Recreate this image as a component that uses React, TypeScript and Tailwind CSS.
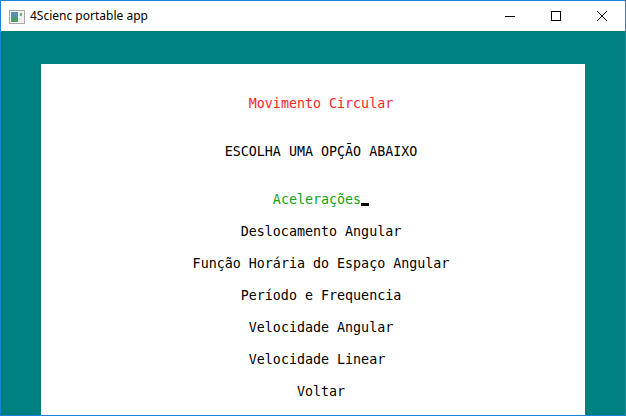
import React from "react";

const mono = { fontFamily: '"DejaVu Sans Mono", "Liberation Mono", monospace' };

function Row({ text, color, pad, className = "" }: { text: string; color?: string; pad?: boolean; className?: string }) {
  return (
    <div className={`h-[16px] leading-[16px] whitespace-pre text-center ${className}`} style={{ color }}>
      {text}
      {pad ? <span className="inline-block w-[8px] h-[1px]" /> : null}
    </div>
  );
}

export default function App() {
  const items: [string, boolean][] = [
    ["Deslocamento Angular", false],
    ["Função Horária do Espaço Angular", false],
    ["Período e Frequencia", false],
    ["Velocidade Angular", false],
    ["Velocidade Linear", true],
    ["Voltar", false],
  ];
  return (
    <div className="w-[626px] h-[416px] border border-[#1883d7] bg-white flex flex-col overflow-hidden">
      {/* title bar */}
      <div className="h-[30px] flex items-center shrink-0 bg-white">
        <svg width="16" height="14" viewBox="0 0 16 14" className="ml-[8px] mt-[1px]">
          <rect x="0.5" y="0.5" width="15" height="13" fill="#f4f4f4" stroke="#a8a8a8" />
          <rect x="2" y="2" width="7" height="10" fill="#5a8fb0" />
          <rect x="2" y="7" width="7" height="5" fill="#4e9a6a" />
          <rect x="10" y="2" width="4" height="10" fill="#e8efe8" />
          <rect x="11" y="3" width="2" height="3" fill="#7ab07a" />
        </svg>
        <span
          className="ml-[5px] text-[12px] text-black"
          style={{ fontFamily: '"Noto Sans", "Open Sans", sans-serif' }}
        >
          4Scienc portable app
        </span>
        <div className="ml-auto flex items-center h-full">
          <div className="w-[46px] h-full flex items-center justify-center">
            <div className="w-[10px] h-[1px] bg-black" />
          </div>
          <div className="w-[46px] h-full flex items-center justify-center">
            <div className="w-[10px] h-[10px] border border-black" />
          </div>
          <div className="w-[46px] h-full flex items-center justify-center">
            <svg width="10" height="10" viewBox="0 0 10 10">
              <path d="M0 0 L10 10 M10 0 L0 10" stroke="black" strokeWidth="1" />
            </svg>
          </div>
        </div>
      </div>
      {/* teal area */}
      <div className="flex-1 bg-[#008080] pt-[33px] px-[40px] flex">
        <div className="flex-1 bg-white pt-[32px] pl-[16px] text-[13.33px] text-black" style={mono}>
          <Row text="Movimento Circular" color="#ff2424" />
          <Row text="ESCOLHA UMA OPÇÃO ABAIXO" className="mt-[32px]" />
          <div className="h-[16px] leading-[16px] whitespace-pre text-center mt-[32px] text-[#13a10e]">
            Acelerações
            <span className="relative inline-block w-[8px] h-[16px] align-top">
              <span className="absolute left-0 top-[11px] w-[8px] h-[3px] bg-black" />
            </span>
          </div>
          {items.map(([t, p]) => (
            <Row key={t} text={t} pad={p} className="mt-[16px]" />
          ))}
        </div>
      </div>
    </div>
  );
}
